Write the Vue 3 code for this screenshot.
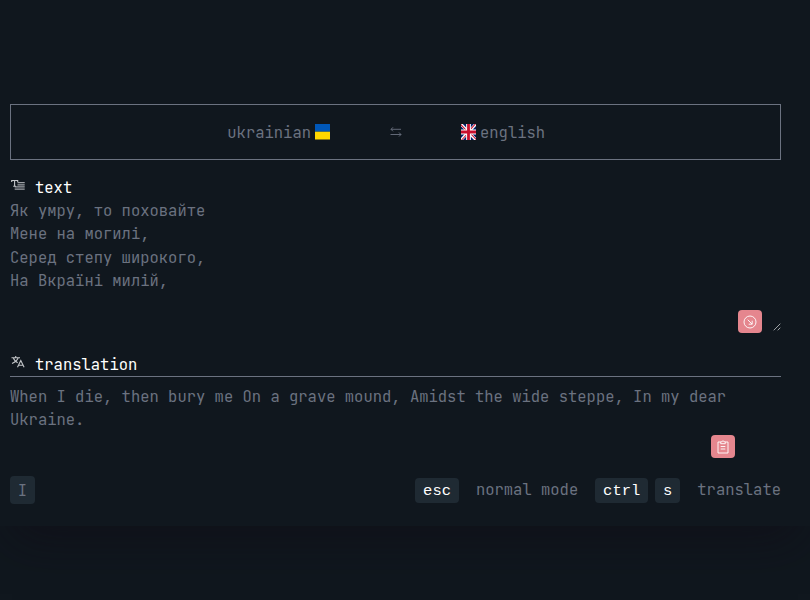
<script setup>
import { ref } from 'vue'

const source = ref('Як умру, то поховайте\nМене на могилі,\nСеред степу широкого,\nНа Вкраїні милій,')
const translation = ref('When I die, then bury me On a grave mound, Amidst the wide steppe, In my dear Ukraine.')
</script>

<template>
  <main class="card">
    <section class="languages">
      <div class="language from">
        <span>ukrainian</span>
        <svg class="flag" viewBox="0 0 15 16" preserveAspectRatio="none">
          <path fill="#0057b8" d="M0 0h15v7.700H0z" />
          <path fill="#ffd700" d="M0 7.700h15v7.800H0z" />
        </svg>
      </div>
      <svg class="swap" viewBox="0 0 12 12" fill="none" stroke="currentColor" stroke-width="0.9">
        <path d="M11 3.300H1M3 1.300l-2 2 2 2M0.500 8.500H11M9 6.500l2 2-2 2" />
      </svg>
      <div class="language to">
        <svg class="flag" viewBox="0 0 512 512" preserveAspectRatio="none">
          <path fill="#012169" d="M0 0h512v512H0z" />
          <path fill="#fff" d="M512 0v64L322 256l190 187v69h-67L254 324 68 512H0v-68l186-187L0 74V0h62l192 188L440 0z" />
          <path fill="#c8102e" d="m184 324 11 34L42 512H0v-3zm124-12 54 8 150 147v45zM512 0 320 196l-4-44L466 0zM0 1l193 189-59-8L0 49z" />
          <path fill="#fff" d="M176 0v512h160V0zM0 176v160h512V176z" />
          <path fill="#c8102e" d="M0 208v96h512v-96zM208 0v512h96V0z" />
        </svg>
        <span>english</span>
      </div>
    </section>

    <section class="source">
      <header class="heading">
        <svg class="glyph" viewBox="0 0 15 15" fill="none" stroke="currentColor">
          <path d="M1.700 4V2.500h6V4M4.600 2.500v5.700M3.200 8.300h2.800" stroke-width="1.100" />
          <path d="M7.500 4.700H14.700M7.500 6.800H14.700M4.700 8.900H14.700M4.700 11.200H14.700" stroke-width="1.200" opacity="0.8" />
        </svg>
        <h2>text</h2>
      </header>
      <div class="editor">
        <p class="verse">{{ source }}</p>
        <button class="action" aria-label="Translate">
          <svg viewBox="0 0 14 14" fill="none" stroke="currentColor" stroke-width="0.9">
            <circle cx="7" cy="7" r="6" />
            <path d="m4.700 4.700 4.400 4.400M9.200 5.700v3.500H5.700" />
          </svg>
        </button>
        <svg class="grip" viewBox="0 0 8 8" stroke="currentColor" stroke-width="0.8">
          <path d="M.7 7.300l6.600-6.600M4.700 7.300l2.600-2.600" />
        </svg>
      </div>
    </section>

    <section class="result">
      <header class="heading">
        <svg class="glyph" viewBox="0 0 15 15" fill="none" stroke="currentColor" stroke-width="1.100">
          <path d="M1.500 2.700h8.500M5.700 1v1.700M3.300 2.700c.7 2.500 2.300 4.200 4.400 5M8.300 2.700C7.500 5.200 5 7.200 2 8.500M7.500 12.200l3.300-6.700 3.300 6.700M8.500 10.200h4.600" />
        </svg>
        <h2>translation</h2>
      </header>
      <p class="output">{{ translation }}</p>
      <button class="action copy" aria-label="Copy">
        <svg viewBox="0 0 14 14" fill="none" stroke="currentColor" stroke-width="0.9">
          <path d="M4.500 2H2v11h10V2H9.500M4.700 3.700V1.700h1.200L7 .7l1.100 1h1.200v2zM4.700 6.500h4.600M4.700 9h4.600" />
        </svg>
      </button>
    </section>

    <footer class="status">
      <span class="mode">I</span>
      <div class="hints">
        <kbd>esc</kbd>
        <span class="hint normal">normal mode</span>
        <kbd>ctrl</kbd>
        <kbd class="second">s</kbd>
        <span class="hint">translate</span>
      </div>
    </footer>
  </main>
</template>

<style>
body {
  background: #10171e;
  min-height: 600px;
  overflow: hidden;
}
</style>

<style scoped>
.card {
  box-sizing: border-box;
  height: 526px;
  padding: 104px 29px 0 10px;
  background: #10171e;
  color: #6b7280;
  font: 15.5px/23.25px "JetBrains Mono", "DejaVu Sans Mono", monospace;
  box-shadow: 0 24px 46px -12px rgba(15, 10, 20, 0.5);
}
.languages {
  box-sizing: border-box;
  height: 56px;
  display: grid;
  grid-template-columns: 319px 131px 1fr;
  align-items: center;
  border: 1px solid #6b7280;
}
.language {
  display: flex;
  align-items: center;
  gap: 4px;
}
.language span {
  padding-top: 1px;
}
.from {
  justify-content: flex-end;
}
.flag {
  width: 15px;
  height: 16px;
}
.swap {
  width: 12px;
  height: 12px;
  justify-self: center;
}
.source {
  margin-top: 16px;
}
.heading {
  display: flex;
  align-items: flex-start;
  gap: 10px;
  height: 23px;
  color: #fff;
}
.glyph {
  width: 15px;
  height: 15px;
  margin-top: 2px;
  color: #c3c6c9;
}
h2 {
  margin: 0;
  font: inherit;
}
p {
  margin: 0;
}
.editor {
  height: 134px;
  display: grid;
  grid-template-columns: 1fr 24px 8px;
  column-gap: 11px;
  align-items: end;
}
.verse {
  align-self: start;
  white-space: pre-line;
}
.action {
  display: grid;
  place-items: center;
  width: 24px;
  height: 23px;
  padding: 0;
  border: 0;
  border-radius: 4px;
  background: #e5868e;
  color: #fff;
}
.action svg {
  width: 14px;
  height: 14px;
}
.grip {
  width: 8px;
  height: 8px;
  margin-bottom: 2px;
  color: #c3c6c9;
}
.result {
  margin-top: 20px;
}
.result .heading {
  border-bottom: 1px solid #6b7280;
}
.output {
  margin-top: 8px;
}
.copy {
  margin: 3.500px 46px 0 auto;
}
.copy svg {
  margin-right: 1px;
}
.status {
  display: flex;
  align-items: flex-start;
  justify-content: space-between;
  margin-top: 18px;
}
.mode {
  width: 25px;
  height: 28px;
  border-radius: 4px;
  background: #1f2a33;
  line-height: 29px;
  text-align: center;
}
.hints {
  display: flex;
  align-items: flex-start;
  padding-top: 2px;
}
kbd {
  box-sizing: border-box;
  height: 25px;
  padding: 0 7.900px;
  border-radius: 4px;
  background: #1f2a33;
  color: #fff;
  font: 15.5px/26px "Liberation Mono", monospace;
}
.hint {
  margin-left: 17px;
}
.normal {
  margin-right: 17px;
}
.second {
  margin-left: 7px;
}
</style>
